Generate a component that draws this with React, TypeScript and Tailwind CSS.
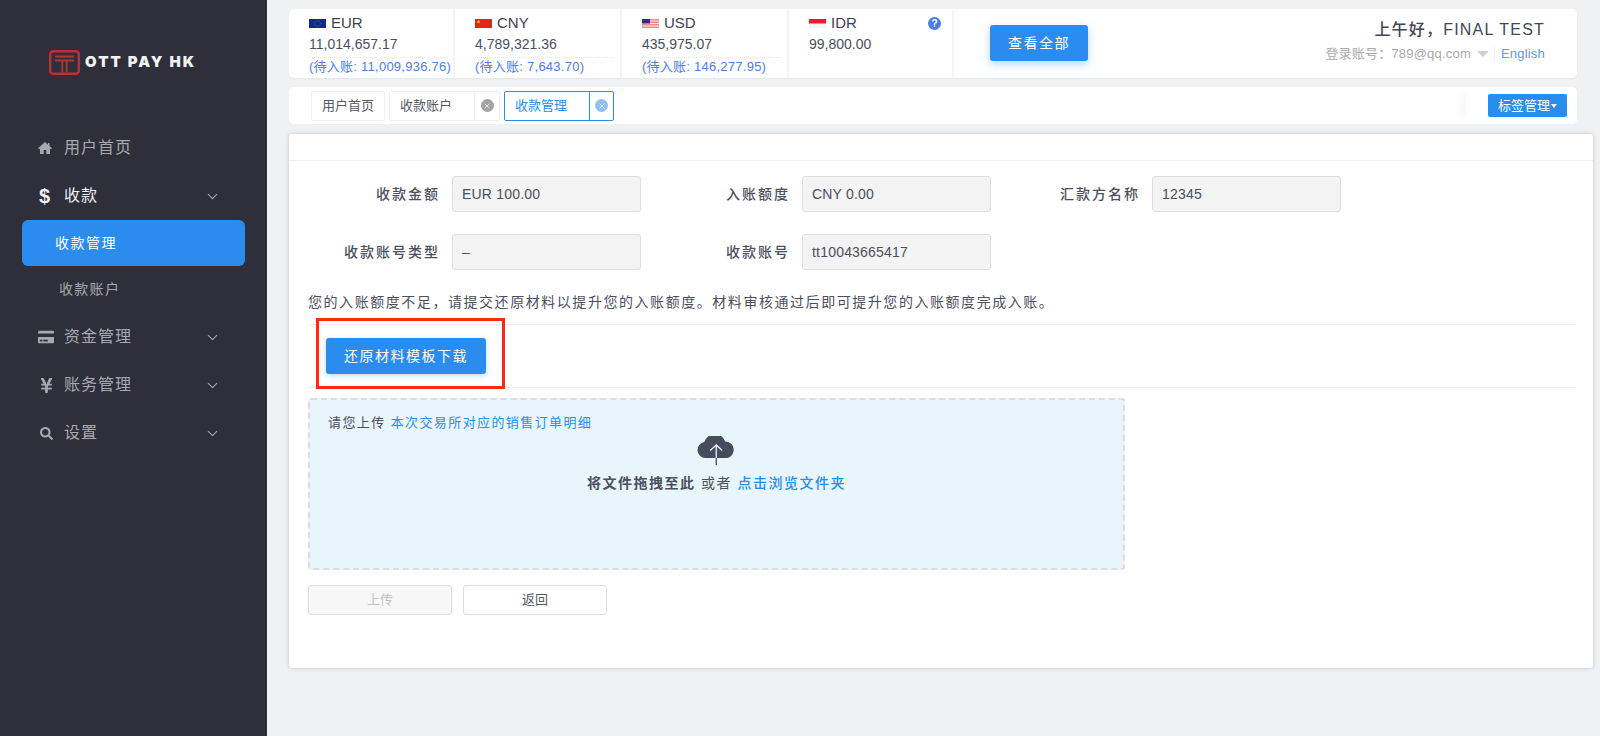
import { ChevronDown, X } from 'lucide-react';
import { FaCreditCard, FaSearch, FaYenSign } from 'react-icons/fa';

const balances = [
  { code: 'EUR', amount: '11,014,657.17', pending: '(待入账: 11,009,936.76)', flag: 'eu', width: 'w-[166px]' },
  { code: 'CNY', amount: '4,789,321.36', pending: '(待入账: 7,643.70)', flag: 'cn', width: 'w-[167px]' },
  { code: 'USD', amount: '435,975.07', pending: '(待入账: 146,277.95)', flag: 'us', width: 'w-[167px]' },
  { code: 'IDR', amount: '99,800.00', pending: '', flag: 'id', width: 'w-[165px]' },
];

function Flag({ type }: { type: string }) {
  if (type === 'eu') {
    return (
      <svg viewBox="0 0 17 9" className="w-[17px] h-[9px]">
        <rect width="17" height="9" fill="#10298a" />
        <ellipse cx="8.5" cy="4.5" rx="3.2" ry="2.8" fill="none" stroke="#8d8a4a" strokeWidth="0.6" strokeDasharray="0.8 0.8" />
      </svg>
    );
  }
  if (type === 'cn') {
    return (
      <svg viewBox="0 0 17 9" className="w-[17px] h-[9px]">
        <rect width="17" height="9" fill="#de2910" />
        <circle cx="3.4" cy="2.8" r="1.3" fill="#ffde00" />
      </svg>
    );
  }
  if (type === 'us') {
    return (
      <svg viewBox="0 0 17 9" className="w-[17px] h-[9px]">
        <rect width="17" height="9" fill="#f08a8a" />
        <rect y="1.5" width="17" height="1" fill="#fbe3e3" />
        <rect y="4" width="17" height="1" fill="#fbe3e3" />
        <rect y="6.5" width="17" height="1" fill="#fbe3e3" />
        <rect width="8" height="4.5" fill="#2b2f86" />
      </svg>
    );
  }
  return (
    <svg viewBox="0 0 17 9" className="w-[17px] h-[9px]">
      <rect width="17" height="9" fill="#f4f4f4" />
      <rect width="17" height="4.5" fill="#f0182d" />
    </svg>
  );
}

function NavRow({ icon, label, arrow, active }: { icon: React.ReactNode; label: string; arrow?: boolean; active?: boolean }) {
  return (
    <div className={`flex items-center h-[48px] pl-[38px] pr-[46px] text-[16px] ${active ? 'text-[#f1f1f3]' : 'text-[#a8a9ae]'}`}>
      <span className="w-[26px] flex justify-start">{icon}</span>
      <span className="tracking-[1px]">{label}</span>
      {arrow && <ChevronDown size={17} strokeWidth={1.5} className="ml-auto text-[#a8a9ae]" />}
    </div>
  );
}

function Field({ label, value }: { label: string; value: string }) {
  return (
    <div className="flex items-center">
      <span className="w-[132px] text-right text-[14px] font-medium tracking-[2px] text-[#4a4f5e]">{label}</span>
      <div className="w-[189px] ml-[12px] h-[36px] flex items-center px-[9px] bg-[#f3f3f3] border border-[#dedede] rounded-[3px] text-[14px] tracking-[0.2px] text-[#4a4f5e]">
        {value}
      </div>
    </div>
  );
}

export default function App() {
  return (
    <div className='flex w-full h-[736px] overflow-hidden bg-[#eff2f5] font-["Liberation_Sans","Noto_Sans_CJK_SC",sans-serif]'>
      <aside className="w-[267px] shrink-0 bg-[#2e2f3a]">
        <div className="flex items-center h-[124px] pl-[49px]">
          <svg viewBox="0 0 31 25" className="w-[31px] h-[25px]">
            <rect x="1.2" y="1.2" width="28.6" height="22.6" rx="3" fill="none" stroke="#b83232" strokeWidth="2.4" />
            <path d="M6 6.5h19M6 10.5h19M13.3 10.5v12M17.7 10.5v12" fill="none" stroke="#b83232" strokeWidth="1.8" />
          </svg>
          <span className='ml-[5px] text-[15px] font-["Inter",sans-serif] font-black tracking-[2px] text-[#f2f2f2]'>OTT PAY HK</span>
        </div>
        <NavRow
          icon={
            <svg viewBox="0 0 14 12" className="w-[14px] h-[12px]" fill="currentColor">
              <path d="M7 0 0 6.2l1 1L2 6.4V12h3.7V8h2.6v4H12V6.4l1 .8 1-1L11.5 4V1H10v1.7Z" />
            </svg>
          }
          label="用户首页"
        />
        <NavRow icon={<span className="ml-[1px] text-[20px] leading-none font-bold">$</span>} label="收款" arrow active />
        <div className="mx-[22px] h-[46px] flex items-center pl-[33px] bg-[#2b8cf0] rounded-[6px] text-[14px] text-white tracking-[1.5px]">收款管理</div>
        <div className="h-[47px] flex items-center pl-[59px] text-[14px] tracking-[1.3px] text-[#a8a9ae]">收款账户</div>
        <NavRow icon={<FaCreditCard size={16} />} label="资金管理" arrow />
        <NavRow icon={<FaYenSign size={17} />} label="账务管理" arrow />
        <NavRow icon={<FaSearch size={13} className="ml-[2px] mt-[1px]" />} label="设置" arrow />
      </aside>

      <main className="flex-1 min-w-0 pl-[22px] pr-[7px]">
        <header className="mt-[9px] mr-[16px] h-[69px] flex bg-white rounded-[5px] shadow-[0_1px_2px_rgba(0,0,0,0.05)]">
          {balances.map((b) => (
            <div key={b.code} className={`relative ${b.width} pl-[20px] pt-[6px] border-r-2 border-[#f3f4f6]`}>
              <div className="flex items-center h-[16px] text-[15px] text-[#3d4250]">
                <Flag type={b.flag} />
                <span className="ml-[5px]">{b.code}</span>
                {b.code === 'IDR' && (
                  <span className="absolute right-[11px] top-[8px] w-[13px] h-[13px] rounded-full bg-[#4a7de8] text-white text-[10px] font-bold leading-[13px] text-center">?</span>
                )}
              </div>
              <div className="mt-[3px] text-[14px] leading-[20px] text-[#4a4f5e]">{b.amount}</div>
              {b.pending && (
                <div className="mt-[3px] mr-[6px] border-t border-dotted border-[#e6e6e6] pt-[1px] text-[13px] leading-[15px] tracking-[0.25px] text-[#4b7ee8] whitespace-nowrap">{b.pending}</div>
              )}
            </div>
          ))}
          <div className="ml-[36px] mt-[16px] w-[98px] h-[36px] flex items-center justify-center bg-[#2b8cf0] rounded-[3px] text-[14px] tracking-[1.5px] text-white shadow-[0_3px_8px_rgba(43,140,240,0.35)]">查看全部</div>
          <div className="ml-auto pr-[32px] pt-[11px] text-right">
            <div className="text-[16px] leading-[20px] tracking-[1.2px] font-medium text-[#434755]">上午好，FINAL TEST</div>
            <div className="mt-[7px] flex items-center justify-end text-[13px] leading-[14px] tracking-[0.2px] text-[#a9a9a9]">
              <span>登录账号：789@qq.com</span>
              <span className="ml-[6px] w-0 h-0 border-x-[6px] border-x-transparent border-t-[6px] border-t-[#cfcfcf]" />
              <span className="ml-[5px] pl-[6px] border-l border-[#eeeeee] text-[#5a9cf0]">English</span>
            </div>
          </div>
        </header>

        <nav className="mt-[9px] mr-[16px] h-[37px] flex items-center bg-white rounded-[5px] pl-[22px]">
          <div className="w-[74px] h-[30px] pl-[10px] flex items-center border border-[#eeeeee] rounded-[2px] text-[13px] text-[#555a66]">用户首页</div>
          <div className="ml-[4px] w-[111px] h-[30px] flex items-center border border-[#eeeeee] rounded-[2px] text-[13px] text-[#555a66]">
            <span className="w-[84px] pl-[10px]">收款账户</span>
            <span className="h-full flex-1 border-l border-[#eeeeee] flex items-center justify-center">
              <span className="w-[13px] h-[13px] rounded-full bg-[#a3a3a3] flex items-center justify-center"><X size={8} strokeWidth={3} className="text-[#e5e5e5]" /></span>
            </span>
          </div>
          <div className="ml-[4px] w-[110px] h-[30px] flex items-center border border-[#2b8cf0] rounded-[2px] text-[13px] text-[#2b8cf0]">
            <span className="w-[84px] pl-[10px]">收款管理</span>
            <span className="h-full flex-1 border-l border-[#2b8cf0] flex items-center justify-center">
              <span className="w-[13px] h-[13px] rounded-full bg-[#8fc1f5] flex items-center justify-center"><X size={8} strokeWidth={3} className="text-[#e5f1fd]" /></span>
            </span>
          </div>
          <div className="ml-auto h-full w-[111px] pr-[10px] flex items-center justify-end shadow-[-10px_0_10px_-6px_rgba(0,0,0,0.04)]">
            <div className="h-[23px] w-[79px] flex items-center justify-center bg-[#2b8cf0] rounded-[2px] text-[13px] text-white">
              标签管理
              <span className="ml-[1px] w-0 h-0 border-x-[3.5px] border-x-transparent border-t-[4px] border-t-white" />
            </div>
          </div>
        </nav>

        <section className="mt-[10px] h-[534px] bg-white rounded-[3px] shadow-[0_0_4px_rgba(0,0,0,0.2)]">
          <div className="h-[27px] border-b border-[#eeeeee]" />
          <div className="pl-[19px] pr-[18px]">
            <div className="pt-[15px] grid grid-cols-[350px_350px_1fr] gap-y-[22px]">
              <Field label="收款金额" value="EUR 100.00" />
              <Field label="入账额度" value="CNY 0.00" />
              <Field label="汇款方名称" value="12345" />
              <Field label="收款账号类型" value="–" />
              <Field label="收款账号" value="tt10043665417" />
            </div>
            <p className="mt-[22px] text-[14px] leading-[20px] tracking-[1.55px] text-[#4a4f5e] whitespace-nowrap">您的入账额度不足，请提交还原材料以提升您的入账额度。材料审核通过后即可提升您的入账额度完成入账。</p>
            <div className="relative mt-[12px] h-[64px] border-y border-[#eeeeee] flex items-center pl-[18px]">
              <div className="w-[160px] h-[36px] flex items-center justify-center bg-[#2b8cf0] rounded-[3px] text-[14px] tracking-[1.5px] text-white shadow-[0_2px_6px_rgba(43,140,240,0.3)]">还原材料模板下载</div>
              <div className="absolute left-[8px] top-[-7px] w-[189px] h-[71px] border-[3px] border-[#ff2a0e]" />
            </div>
            <div className="relative mt-[10px] w-[817px] h-[172px] bg-[#e8f5fb] border-2 border-dashed border-[#dddddd] rounded-[3px] text-[13px] tracking-[1.4px]">
              <div className="absolute left-[18px] top-[13px] text-[#4a4f5e]">
                请您上传 <span className="text-[#2b8cf0]">本次交易所对应的销售订单明细</span>
              </div>
              <div className="pt-[36px] flex flex-col items-center">
                <svg viewBox="0 0 38.5 29" className="w-[39px] h-[29px]">
                  <path d="M8 22a8 8 0 0 1-1-15.9A11 11 0 0 1 28 5.6 8.3 8.3 0 0 1 30 22Z" fill="#474c5c" />
                  <path d="M19 22V9M13 14.5 19 9l6 5.5" fill="none" stroke="#e8f5fb" strokeWidth="1.3" />
                  <path d="M19 22v7" stroke="#474c5c" strokeWidth="1.3" />
                </svg>
                <div className="mt-[8px] text-[14px] tracking-[1.5px] text-[#4a4f5e]">
                  <span className="font-bold">将文件拖拽至此</span> 或者 <span className="font-medium text-[#2b8cf0]">点击浏览文件夹</span>
                </div>
              </div>
            </div>
            <div className="mt-[15px] flex gap-[11px] text-[13px]">
              <div className="w-[144px] h-[30px] flex items-center justify-center bg-[#f7f7f7] border border-[#dddddd] rounded-[3px] text-[#c2c2c2]">上传</div>
              <div className="w-[144px] h-[30px] flex items-center justify-center bg-white border border-[#dddddd] rounded-[3px] text-[#555a66]">返回</div>
            </div>
          </div>
        </section>
      </main>
    </div>
  );
}
